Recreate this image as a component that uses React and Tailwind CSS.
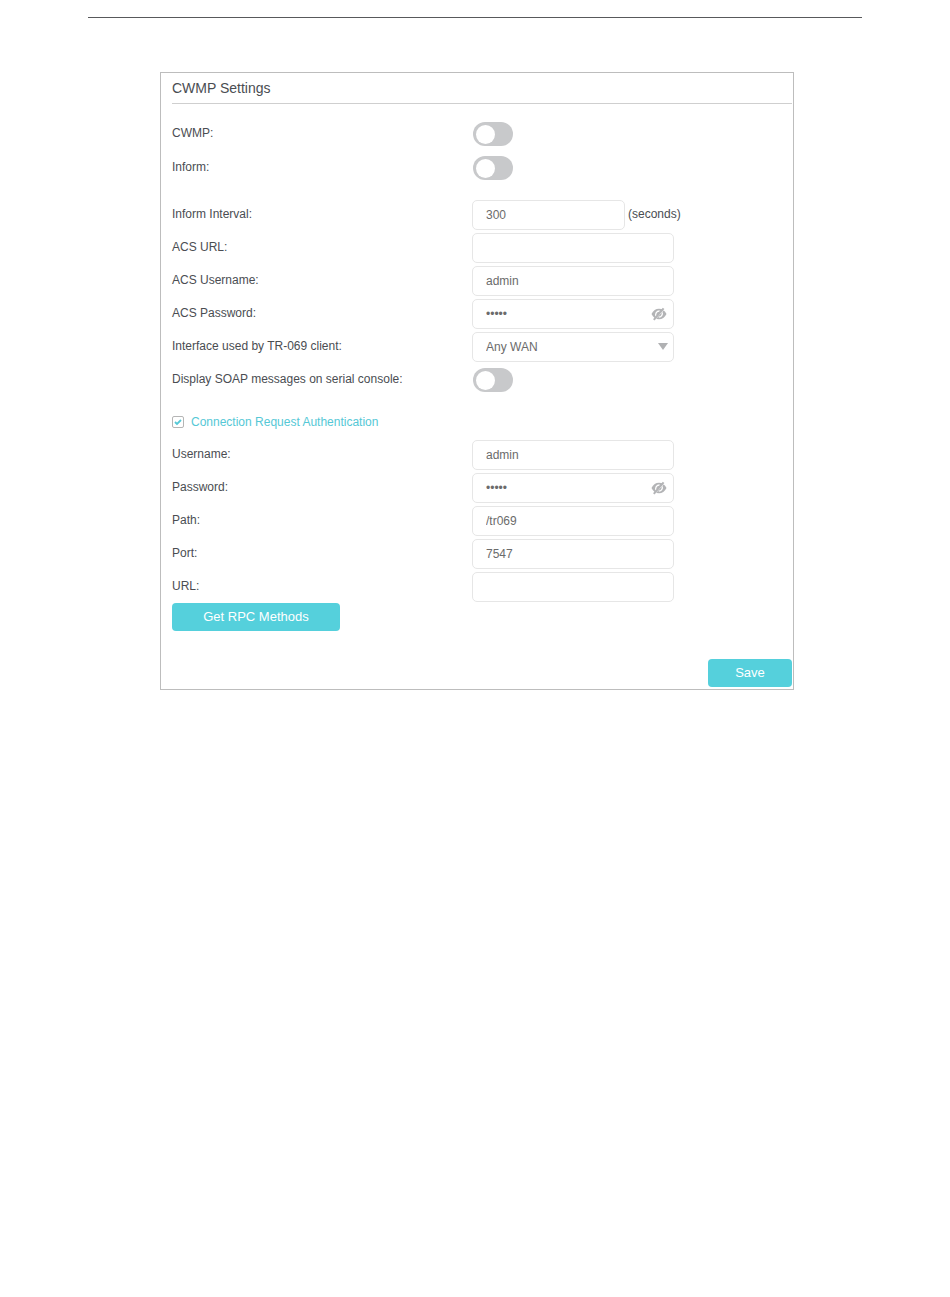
import React, { useState } from 'react';

const inputClass =
  'h-[30px] w-full rounded-[5px] border border-[#e6e6e6] bg-white pl-[13px] pr-8 text-[12px] text-[#6b6b6b] outline-none';

const Row = ({ id, label, children }) => (
  <div className="flex h-[30px] items-center">
    <label htmlFor={id} className="w-[300px] shrink-0 pb-[2px] text-[12px] leading-4">
      {label}
    </label>
    {children}
  </div>
);

const Toggle = ({ id }) => (
  <input
    id={id}
    type="checkbox"
    role="switch"
    className="ml-px flex h-6 w-10 cursor-pointer appearance-none items-center rounded-full bg-[#c8c9cb] px-[3px] before:size-[19px] before:rounded-full before:bg-white checked:justify-end checked:bg-[#55d0dc]"
  />
);

const TextField = ({ id, value }) => (
  <div className="w-[202px]">
    <input id={id} type="text" defaultValue={value} className={inputClass} />
  </div>
);

const EyeOff = () => (
  <svg width="16" height="14" viewBox="0 0 16 14" fill="none" aria-hidden="true">
    <path d="M.5 7C2.2 3.500 4.800 1.800 8 1.800S13.800 3.500 15.500 7C13.800 10.500 11.200 12.200 8 12.200S2.200 10.500.500 7Z" fill="#b3b4b6" />
    <path d="M5 9.200C4 6.500 5.500 4 8.600 4" stroke="#fff" strokeWidth="1.300" />
    <path d="M11.200 5.400C11.800 7.800 10.400 10 7.800 10.100" stroke="#fff" strokeWidth="1.300" />
    <path d="M4.300 12.300 12.900 2.600" stroke="#fff" strokeWidth="1" />
    <path d="M2.800 12.800 12.600 1.400" stroke="#b3b4b6" strokeWidth="2" />
  </svg>
);

const PasswordField = ({ id }) => {
  const [visible, setVisible] = useState(false);

  return (
    <div className="relative w-[202px]">
      <input
        id={id}
        type={visible ? 'text' : 'password'}
        defaultValue="admin"
        className={inputClass}
      />
      <button
        type="button"
        aria-label="Show password"
        onClick={() => setVisible(!visible)}
        className="absolute inset-y-0 right-[7px] flex items-center"
      >
        <EyeOff />
      </button>
    </div>
  );
};

const App = () => {
  return (
    <main className="bg-white px-[88px] pt-[17px] font-['Liberation_Sans',Arial,sans-serif] text-[#4a4d52]">
      <hr className="border-[#58595b]" />

      <form
        onSubmit={(e) => e.preventDefault()}
        className="ml-[72px] mr-[68px] mt-[54px] border border-[#bdbdbd] pb-[2px] pl-[11px] pr-px"
      >
        <h1 className="border-b border-[#cfcfcf] pb-[5px] pt-[5px] text-[14px] leading-5">
          CWMP Settings
        </h1>

        <div className="mt-[15px] flex flex-col gap-1">
          <Row id="cwmp" label="CWMP:">
            <Toggle id="cwmp" />
          </Row>
          <Row id="inform" label="Inform:">
            <Toggle id="inform" />
          </Row>
        </div>

        <div className="mt-[17px] flex flex-col gap-[3px]">
          <Row id="interval" label="Inform Interval:">
            <div className="w-[153px]">
              <input id="interval" type="text" defaultValue="300" className={inputClass} />
            </div>
            <span className="ml-[3px] pb-[2px] text-[12px] leading-4">(seconds)</span>
          </Row>
          <Row id="acs-url" label="ACS URL:">
            <TextField id="acs-url" value="" />
          </Row>
          <Row id="acs-username" label="ACS Username:">
            <TextField id="acs-username" value="admin" />
          </Row>
          <Row id="acs-password" label="ACS Password:">
            <PasswordField id="acs-password" />
          </Row>
          <Row id="interface" label="Interface used by TR-069 client:">
            <div className="relative w-[202px]">
              <select id="interface" className={`${inputClass} appearance-none`}>
                <option>Any WAN</option>
              </select>
              <svg
                width="10"
                height="7"
                viewBox="0 0 10 7"
                className="pointer-events-none absolute right-[6px] top-[11px]"
                aria-hidden="true"
              >
                <path d="M0 0h10L5 7Z" fill="#b0b1b3" />
              </svg>
            </div>
          </Row>
          <Row id="soap" label="Display SOAP messages on serial console:">
            <Toggle id="soap" />
          </Row>
        </div>

        <div className="mt-[17px] flex h-5 items-center gap-[7px]">
          <span className="relative flex size-3">
            <input
              id="auth"
              type="checkbox"
              defaultChecked
              className="peer size-3 appearance-none rounded-[2px] border border-[#b5b5b5] bg-white"
            />
            <svg
              viewBox="0 0 12 12"
              className="pointer-events-none absolute inset-0 hidden size-3 peer-checked:block"
              fill="none"
              aria-hidden="true"
            >
              <path d="M3 6l2 2 4-4" stroke="#55c8d6" strokeWidth="1.800" />
            </svg>
          </span>
          <label htmlFor="auth" className="text-[12px] leading-4 text-[#55c8d6]">
            Connection Request Authentication
          </label>
        </div>

        <div className="mt-2 flex flex-col gap-[3px]">
          <Row id="username" label="Username:">
            <TextField id="username" value="admin" />
          </Row>
          <Row id="password" label="Password:">
            <PasswordField id="password" />
          </Row>
          <Row id="path" label="Path:">
            <TextField id="path" value="/tr069" />
          </Row>
          <Row id="port" label="Port:">
            <TextField id="port" value="7547" />
          </Row>
          <Row id="url" label="URL:">
            <TextField id="url" value="" />
          </Row>
        </div>

        <button
          type="button"
          className="mt-px block h-7 w-[168px] rounded-[4px] bg-[#55d0dc] text-[13px] leading-5 text-white"
        >
          Get RPC Methods
        </button>

        <div className="mt-7 flex justify-end">
          <button
            type="submit"
            className="h-7 w-[84px] rounded-[4px] bg-[#55d0dc] text-[13px] leading-5 text-white"
          >
            Save
          </button>
        </div>
      </form>
    </main>
  );
};

export default App;
